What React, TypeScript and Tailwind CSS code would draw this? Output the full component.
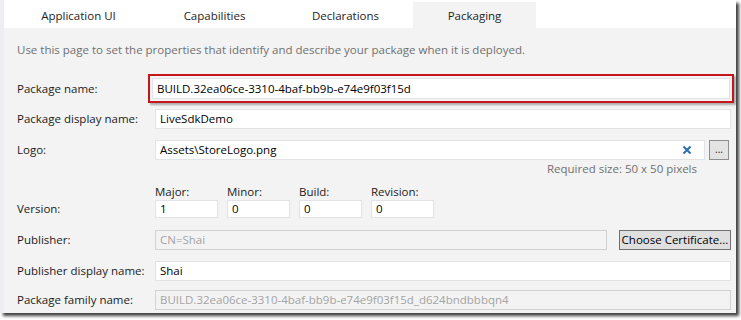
import React from "react";

const font = { fontFamily: '"Open Sans", "Noto Sans", sans-serif' };

function Label({ children, w = "w-[138px]", className = "" }: { children: React.ReactNode; w?: string; className?: string }) {
  return <div className={"shrink-0 text-[11.5px] text-[#1b1b1b] " + w + " " + className}>{children}</div>;
}

function Input({ value, w, disabled = false, h = "h-[20px]" }: { value: string; w: string; disabled?: boolean; h?: string }) {
  return (
    <div
      className={
        "shrink-0 flex items-center pl-[4px] text-[11.5px] border whitespace-nowrap overflow-hidden " +
        (disabled ? "bg-[#f3f3f3] border-[#d2d2d2] text-[#a3a3a3] " : "bg-white border-[#e1e3e6] text-black ") +
        w +
        " " +
        h
      }
    >
      {value}
    </div>
  );
}

export default function App() {
  return (
    <div className="w-[741px] h-[320px] bg-white overflow-hidden" style={font}>
      <div className="w-[736px] h-[313px] flex bg-[#f3f3f3] shadow-[3px_3px_3px_rgba(0,0,0,0.75)] overflow-hidden">
        <div className="w-[4px] shrink-0 bg-[#eceef2]" />
        <div className="flex-1 flex flex-col">
          <div className="h-[28px] shrink-0 bg-white flex items-end pl-[13px] text-[11.5px] text-[#1e1e1e]">
            <div className="w-[123px] h-[26px] flex items-center justify-center pt-[2px]">Application UI</div>
            <div className="w-[123px] h-[26px] ml-[13px] flex items-center justify-center pt-[2px]">Capabilities</div>
            <div className="w-[123px] h-[26px] ml-[8px] flex items-center justify-center pt-[2px]">Declarations</div>
            <div className="w-[123px] h-[26px] ml-[6px] flex items-center justify-center pt-[2px] bg-[#f3f3f3]">Packaging</div>
          </div>
          <div className="flex flex-col pl-[13px] shrink-0">
            <div className="mt-[14px] h-[16px] leading-[16px] text-[11.5px] text-[#707070]">
              Use this page to set the properties that identify and describe your package when it is deployed.
            </div>
            <div className="mt-[16px] flex items-center h-[29px]">
              <Label w="w-[131px]">Package name:</Label>
              <div className="w-[586px] h-[29px] border-2 border-[#c4161c] p-[2px] bg-[#f3f3f3] shadow-[2px_2px_2px_rgba(0,0,0,0.3)]">
                <Input value="BUILD.32ea06ce-3310-4baf-bb9b-e74e9f03f15d" w="w-full" h="h-[21px]" />
              </div>
            </div>
            <div className="mt-[6px] flex items-center">
              <Label>Package display name:</Label>
              <Input value="LiveSdkDemo" w="w-[576px]" />
            </div>
            <div className="mt-[11px] flex items-center">
              <Label className="self-start pt-[1px]">Logo:</Label>
              <div className="flex flex-col w-[550px]">
                <div className="h-[20px] flex items-center bg-white border border-[#e1e3e6] pl-[4px] pr-[12px] text-[11.5px]">
                  <span className="flex-1">Assets\StoreLogo.png</span>
                  <svg width="10" height="10" viewBox="0 0 10 10">
                    <path d="M1.5 1.5 L8.5 8.5 M8.5 1.5 L1.5 8.5" stroke="#2c6db5" strokeWidth="2" />
                  </svg>
                </div>
                <div className="text-right pr-[8px] text-[11.5px] leading-[14px] mt-[2px] text-[#707070]">Required size: 50 x 50 pixels</div>
              </div>
              <div className="self-start ml-[4px] w-[20px] h-[20px] border border-[#8d8d8d] bg-[#e3e3e3] flex items-center justify-center text-[10px] leading-none text-[#222] pb-[3px]">
                ...
              </div>
            </div>
            <div className="mt-[9px] flex items-end">
              <Label className="pb-[1px]">Version:</Label>
              {["Major:", "Minor:", "Build:", "Revision:"].map((l, i) => (
                <div key={l} className={"flex flex-col " + (i === 0 ? "" : "ml-[9px]")}>
                  <div className="text-[11.5px] leading-[14px] text-[#1b1b1b] mb-[1px]">{l}</div>
                  <Input value={i === 0 ? "1" : "0"} w="w-[63px]" h="h-[18px]" />
                </div>
              ))}
            </div>
            <div className="mt-[12px] flex items-center">
              <Label>Publisher:</Label>
              <Input value="CN=Shai" w="w-[452px]" disabled />
              <div className="ml-[12px] w-[112px] h-[20px] border border-[#707070] bg-[#dfdfdf] flex items-center justify-center text-[11.5px] text-black whitespace-nowrap">
                Choose Certificate...
              </div>
            </div>
            <div className="mt-[11px] flex items-center">
              <Label>Publisher display name:</Label>
              <Input value="Shai" w="w-[576px]" />
            </div>
            <div className="mt-[9px] flex items-center">
              <Label>Package family name:</Label>
              <Input value="BUILD.32ea06ce-3310-4baf-bb9b-e74e9f03f15d_d624bndbbbqn4" w="w-[576px]" disabled />
            </div>
          </div>
        </div>
      </div>
    </div>
  );
}
